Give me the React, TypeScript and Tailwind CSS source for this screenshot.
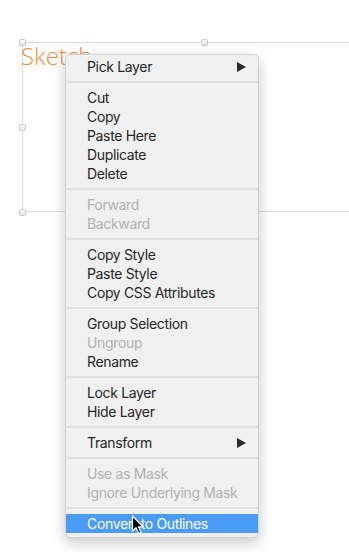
import React from "react";

type Item = { label: string; disabled?: boolean; arrow?: boolean; active?: boolean } | "sep";

const items: Item[] = [
  { label: "Pick Layer", arrow: true },
  "sep",
  { label: "Cut" },
  { label: "Copy" },
  { label: "Paste Here" },
  { label: "Duplicate" },
  { label: "Delete" },
  "sep",
  { label: "Forward", disabled: true },
  { label: "Backward", disabled: true },
  "sep",
  { label: "Copy Style" },
  { label: "Paste Style" },
  { label: "Copy CSS Attributes" },
  "sep",
  { label: "Group Selection" },
  { label: "Ungroup", disabled: true },
  { label: "Rename" },
  "sep",
  { label: "Lock Layer" },
  { label: "Hide Layer" },
  "sep",
  { label: "Transform", arrow: true },
  "sep",
  { label: "Use as Mask", disabled: true },
  { label: "Ignore Underlying Mask", disabled: true },
  "sep",
  { label: "Convert to Outlines", active: true },
];

function Handle({ className }: { className: string }) {
  return (
    <div
      className={`absolute w-[7px] h-[7px] rounded-[2px] border border-[#c8c8c8] bg-gradient-to-b from-[#fafafa] to-[#e6e6e6] ${className}`}
    />
  );
}

function Arrow({ color }: { color: string }) {
  return (
    <svg width="9" height="10" viewBox="0 0 9 10">
      <path d="M0 0 L9 5 L0 10 Z" fill={color} />
    </svg>
  );
}

export default function App() {
  return (
    <div
      className="relative w-[349px] h-[552px] bg-white overflow-hidden"
      style={{ fontFamily: "Inter, 'Liberation Sans', sans-serif" }}
    >
      {/* selection box on canvas */}
      <div className="absolute left-[22px] top-[42px] w-[364px] h-[170px] border border-[#dcdcdc]" />
      <div
        className="absolute z-0 left-[21px] top-[41px] text-[24px] font-light text-[#f08c38] leading-[30px]"
        style={{ fontFamily: "'Open Sans', Inter, sans-serif" }}
      >
        Sketch
      </div>
      <Handle className="left-[19px] top-[39px]" />
      <Handle className="left-[201px] top-[39px]" />
      <Handle className="left-[19px] top-[124px]" />
      <Handle className="left-[19px] top-[209px]" />

      {/* context menu */}
      <div className="absolute z-10 left-[65px] top-[54px] w-[194px] rounded-[5px] border border-[#d2d2d2] bg-[#f0f0f0] pt-[2px] pb-[4px] shadow-[0_5px_14px_rgba(0,0,0,0.22)]">
        {items.map((it, i) =>
          it === "sep" ? (
            <div key={i} className="h-[12px] flex items-center">
              <div className="h-[2px] w-full bg-[#dfdfdf]" />
            </div>
          ) : (
            <div
              key={i}
              className={`h-[19px] flex items-center justify-between pl-[21px] pr-[12px] text-[14px] leading-[19px] tracking-[-0.35px] ${
                it.active ? "bg-[#4b9cf8] text-white" : it.disabled ? "text-[#b2b2b2]" : "text-[#262626]"
              }`}
            >
              <span>{it.label}</span>
              {it.arrow && <Arrow color="#2a2a2a" />}
            </div>
          )
        )}
      </div>

      {/* mouse cursor */}
      <svg
        className="absolute z-20 left-[131px] top-[515px]"
        width="14"
        height="21"
        viewBox="0 0 14 21"
      >
        <path
          d="M1.5 1 L1.5 16 L5 12.6 L7.6 18.6 L10 17.6 L7.5 11.8 L12 11.8 Z"
          fill="#000"
          stroke="#fff"
          strokeWidth="1.2"
          strokeLinejoin="round"
        />
      </svg>
    </div>
  );
}
